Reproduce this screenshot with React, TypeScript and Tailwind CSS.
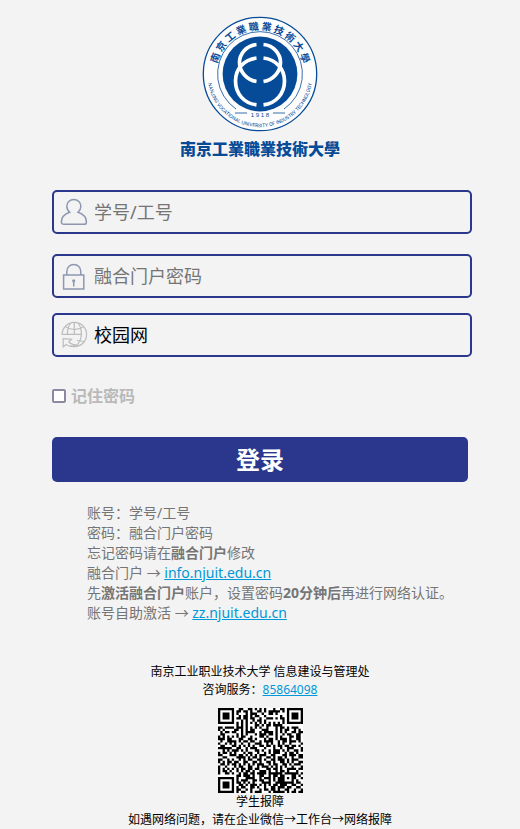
import { useId } from 'react';
import type { ReactNode } from 'react';

const QR_ROWS = [
  '#######..##..##.#.#.#...#..##.#######',
  '#.....#.##.##.#..##.#.#####.#.#.....#',
  '#.###.#.#...#.###..#..##.#....#.###.#',
  '#.###.#..#.##.#.##..#......#..#.###.#',
  '#.###.#.##.##.##..#..###.#.##.#.###.#',
  '#.....#...#.#..#.##.#.......#.#.....#',
  '#######.#.#.#.#.#.#.#.#.#.#.#.#######',
  '........#.#.#...##.#.##.####.........',
  '##.####.###.#.#.#.#..#...#.##.#.###..',
  '#.#....##.#.#.##...###...#.#.##..#.#.',
  '.#.##.##..#.####..#.####.#.#.#..##.##',
  '.##.....#.#.#...#.###.##.#..#.##..##.',
  '#.#.#.#.#.##..#...##.#...#.#...##.##.',
  '###.##...##..##.#...#.##.#.###.#..##.',
  '.#..####.#.##.##..#.####..#.##.###.#.',
  '#..#.#.#..#..#..###..#.#..#.#..#....#',
  '.##...##.#.#.#.#..##.##.#.##.##.##.#.',
  '######..##..#.###...#...#..#..###...#',
  '..#.#.###.#.#...##.#..#.###.#.#..##.#',
  '#.##.#.#...#.##..#..#.#.###..#.##.#..',
  '##...###.##.#.#.#.###..##...##.###.##',
  '..##....####.#.##.#..##.#.##.#..#..##',
  '##..#.#..#.#.##..##.#..##.###.#.###..',
  '#.#.##.##..##..##.#..##.#..##.#.#..##',
  '.##.#.##.#.#.#.#.###..#.##..##.#.###.',
  '#..#...#.##..##..#.###.#.#.#.#..#...#',
  '#.#.#.#.#.##.##.##...##.##.#..####.##',
  '#.##.#..#.#.##.#..###.#..#.##.#...#..',
  '#..##.#..#.##.##.####.######.######.#',
  '........##.###.#..##..#.##.##...##.#.',
  '#######.#...####..#.###.#.###.#.##..#',
  '#.....#.#.###..##.##..#.#.###...#.#..',
  '#.###.#.##.#.#.#...####..########.##.',
  '#.###.#..##.#.###.#.#.#.##.###..##..#',
  '#.###.#.#.##..##.#..#..##.###.##..##.',
  '#.....#.##..#.#...#.##.##.#..##..#..#',
  '#######.#.##..#.###...#.#####.#.##.##',
];

function QrCode() {
  const cells = QR_ROWS.flatMap((row, y) =>
    [...row].map((c, x) => (c === '#' ? `M${x} ${y}h1v1h-1z` : '')),
  ).join('');
  return (
    <svg viewBox="0 0 37 37" className="size-[85px]" role="img" aria-label="学生报障">
      <rect width="37" height="37" fill="#fff" />
      <path d={cells} fill="#000" />
    </svg>
  );
}

const SEAL_CHARS = [...'南京工業職業技術大學'];

function Seal() {
  const id = useId();
  return (
    <svg viewBox="-58 -58 116 116" className="size-[116px]" role="img" aria-label="校徽">
      <circle r="56.7" fill="#fdfdfe" stroke="#064b97" strokeWidth="1.3" />
      <path d="M-24 35A42.4 42.4 0 1 1 24 35" fill="none" stroke="#064b97" strokeWidth=".8" />
      <path d="M-25 39H-13M13 39H25" stroke="#064b97" strokeWidth=".8" />
      <circle r="37.4" fill="#064b97" />
      <g fill="none" stroke="#fff" strokeWidth="3.7">
        <path d="M-3.5 -29.5C-14 -28.5 -20.5 -20 -20.5 -11.5C-20.5 -2 -13 6 -3.5 7.5" />
        <path d="M3.5 -29.5C14 -28.5 20.5 -20 20.5 -11.5C20.5 -2 13 6 3.5 7.5" />
        <path d="M-3.5 -16C-16 -14.5 -24.5 -5 -24.5 7C-24.5 19.5 -16 29.5 -3.5 30.8" />
        <path d="M3.5 -16C16 -14.5 24.5 -5 24.5 7C24.5 19.5 16 29.5 3.5 30.8" />
      </g>
      <g
        fill="#064b97"
        textAnchor="middle"
        className="font-['Noto_Sans_CJK_TC',sans-serif] text-[10px] font-bold"
      >
        {SEAL_CHARS.map((c, i) => (
          <text key={i} y="-44" transform={`rotate(${-70 + i * 15.6})`}>
            {c}
          </text>
        ))}
      </g>
      <text
        y="43"
        textAnchor="middle"
        fill="#064b97"
        className="font-['Liberation_Sans',sans-serif] text-[6px]"
      >
        1 9 1 8
      </text>
      <path id={id} d="M-52.4 -4A52.6 52.6 0 1 0 52.4 -4" fill="none" />
      <text
        fill="#064b97"
        textAnchor="middle"
        className="font-['Roboto',sans-serif] text-[5px]"
      >
        <textPath href={`#${id}`} startOffset="50%">
          NANJING VOCATIONAL UNIVERSITY OF INDUSTRY TECHNOLOGY
        </textPath>
      </text>
    </svg>
  );
}

function UserIcon() {
  return (
    <svg viewBox="0 0 28 28" className="size-7" fill="none" stroke="#8d98b0" strokeWidth="1.5">
      <path d="M9.7 14.2C7.8 12.6 6.8 10.5 6.8 8.2C6.8 4.3 9.8 1.6 13.8 1.6S20.9 4.3 20.9 8.2C20.9 10.5 19.8 12.6 18 14.2C23 15.8 26.4 19.6 26.4 24.2C26.4 25.6 25.5 26.3 24 26.3H3.8C2.3 26.3 1.4 25.6 1.4 24.2C1.4 19.6 4.8 15.8 9.7 14.2Z" />
    </svg>
  );
}

function LockIcon() {
  return (
    <svg viewBox="0 0 28 28" className="size-7" fill="none" stroke="#8d98b0" strokeWidth="1.5">
      <path d="M3.6 13H23.8V27H3.6ZM6.8 13V9.6C6.8 5.4 9.8 2.6 13.8 2.6S20.8 5.4 20.8 9.6V13" />
      <circle cx="13.7" cy="18.8" r="1.6" fill="#8d98b0" stroke="none" />
      <path d="M13.7 19V24.5" />
    </svg>
  );
}

function GlobeIcon() {
  return (
    <svg viewBox="0 0 28 28" className="size-7" fill="none" stroke="#bcbcbc" strokeWidth="1.2">
      <path d="M2 13.5C2.3 6.5 7.8 1.3 14.5 1.3C21.2 1.3 26.6 6.7 26.6 13.4S21.2 25.6 14.5 25.6C12.9 25.6 11.4 25.3 10 24.7" />
      <path d="M5.5 5.8C11 9.2 18 9.2 23.7 5.8M2 13.4H22M14.3 1.5V13.4M10.6 2C8.4 5.2 7.3 9 7.5 13M18.2 2C20.4 5.2 21.5 9 21.3 13" />
      <path d="M21.3 14C21 18 19.5 22 16 25.2M17 19.5L24 20.5" />
      <path d="M3.2 17.6V26L6 23.6C9.5 26.2 13 25.4 15.8 23.8C12 23.4 10 22.3 8.8 20.8L11.5 18.2Z" />
    </svg>
  );
}

function Field({ icon, children }: { icon: ReactNode; children: ReactNode }) {
  return (
    <div className="-mr-1 flex h-11 items-center gap-1.5 rounded-[5px] border-2 border-[#2a378d] pl-1.5 text-lg">
      {icon}
      {children}
    </div>
  );
}

const control =
  'h-full min-w-0 flex-1 appearance-none bg-transparent text-lg text-black outline-none placeholder:text-[#757575]';
const link = 'text-[#0098d8] underline';

export default function App() {
  return (
    <main className="min-h-screen bg-[#f3f3f3] font-['Noto_Sans','Noto_Sans_CJK_SC',sans-serif]">
      <header className="flex flex-col items-center pt-4">
        <Seal />
        <h1 className="mt-1 font-['Noto_Sans_CJK_TC',sans-serif] text-[16px] leading-6 font-black whitespace-nowrap text-[#064b97]">
          南京工業職業技術大學
        </h1>
      </header>

      <form className="mx-[10%] mt-[30px]" onSubmit={(e) => e.preventDefault()}>
        <Field icon={<UserIcon />}>
          <input className={control} placeholder="学号/工号" aria-label="学号/工号" />
        </Field>
        <div className="mt-5">
          <Field icon={<LockIcon />}>
            <input
              type="password"
              className={control}
              placeholder="融合门户密码"
              aria-label="融合门户密码"
            />
          </Field>
        </div>
        <div className="mt-[15px]">
          <Field icon={<GlobeIcon />}>
            <select className={control} aria-label="网络">
              <option>校园网</option>
            </select>
          </Field>
        </div>
        <label className="mt-[27px] flex h-6 items-center gap-[5px] text-base font-bold text-[#b9b9b9]">
          <input
            type="checkbox"
            className="size-3.5 appearance-none rounded-[2px] border-2 border-[#8d8a9f] bg-white checked:bg-[#2a378d]"
          />
          记住密码
        </label>
        <button
          type="submit"
          className="mt-[29px] flex h-[45px] w-full items-center justify-center rounded-[5px] bg-[#2a378d] text-2xl font-bold text-white"
        >
          登录
        </button>
      </form>

      <section className="mr-4 ml-[10%] pt-[21px] pl-[35px] text-sm leading-5 text-[#757575]">
        <p>账号：学号/工号</p>
        <p>密码：融合门户密码</p>
        <p>
          忘记密码请在<b>融合门户</b>修改
        </p>
        <p>
          融合门户 → <a href="#info" className={link}>info.njuit.edu.cn</a>
        </p>
        <p>
          先<b>激活融合门户</b>账户，设置密码<b>20分钟后</b>再进行网络认证。
        </p>
        <p>
          账号自助激活 → <a href="#zz" className={link}>zz.njuit.edu.cn</a>
        </p>
      </section>

      <footer className="mt-10 flex flex-col items-center text-center text-xs leading-[18px] text-black">
        <p>南京工业职业技术大学 信息建设与管理处</p>
        <p>
          咨询服务：<a href="#tel" className={link}>85864098</a>
        </p>
        <div className="mt-[9px]">
          <QrCode />
        </div>
        <p>学生报障</p>
        <p>如遇网络问题，请在企业微信→工作台→网络报障</p>
      </footer>
    </main>
  );
}
